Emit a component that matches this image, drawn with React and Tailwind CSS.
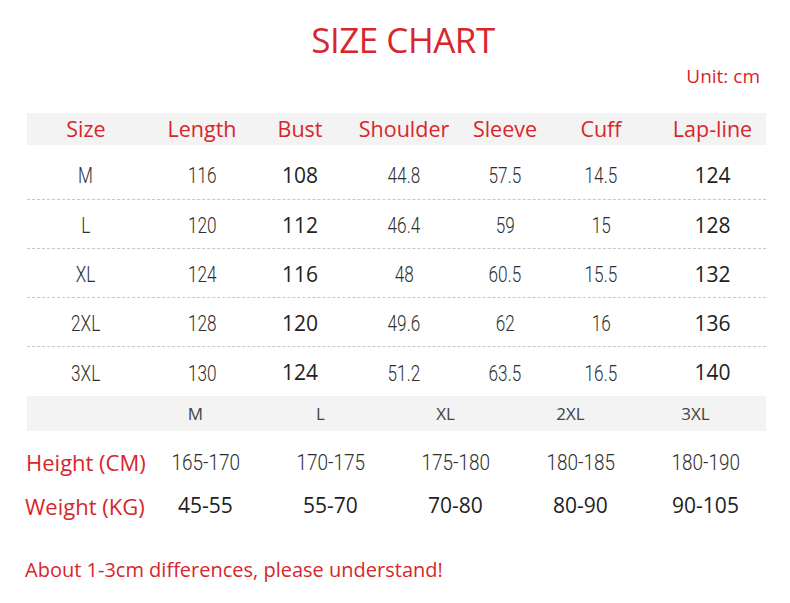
const sizes = [
  ['M', '116', '108', '44.8', '57.5', '14.5', '124'],
  ['L', '120', '112', '46.4', '59', '15', '128'],
  ['XL', '124', '116', '48', '60.5', '15.5', '132'],
  ['2XL', '128', '120', '49.6', '62', '16', '136'],
  ['3XL', '130', '124', '51.2', '63.5', '16.5', '140'],
];

const headers = ['Size', 'Length', 'Bust', 'Shoulder', 'Sleeve', 'Cuff', 'Lap-line'];

const heights = ['165-170', '170-175', '175-180', '180-185', '180-190'];
const weights = ['45-55', '55-70', '70-80', '80-90', '90-105'];

const cols = 'grid grid-cols-[118px_114px_82px_126px_76px_116px_107px]';
// DIN-like condensed numerals
const narrow = "inline-block font-['Roboto',sans-serif] font-light text-[#2e2e2e]";

const App = () => {
  return (
    <div className="w-[790px] h-[603px] bg-white font-['Open_Sans',sans-serif] text-[#d7262c]">
      <h1 className="pt-[18px] pl-[16px] text-center text-[35px] leading-[44px] tracking-[-0.5px]">SIZE CHART</h1>
      <p className="mt-[2px] pr-[30px] text-right text-[19px] leading-[24px]">Unit: cm</p>

      <div className="mx-[27px] mt-[25px] w-[739px]">
        <div className={`${cols} h-[32px] items-center bg-[#f3f3f3] text-center text-[21.5px]`}>
          {headers.map((h) => (
            <span key={h}>{h}</span>
          ))}
        </div>

        {sizes.map((row, i) => (
          <div
            key={row[0]}
            className={`${cols} items-center text-center ${
              i === 0 ? 'h-[55px] pt-[7px]' : 'h-[49px] pt-[3px]'
            } ${i < sizes.length - 1 ? 'border-b border-dashed border-[#c8c8c8]' : ''}`}
          >
            {row.map((v, j) => (
              <div key={j}>
                <span
                  className={
                    j === 2 || j === 6
                      ? "font-['Open_Sans',sans-serif] text-[21px] text-[#222]"
                      : `${narrow} scale-x-[0.78] text-[22px]`
                  }
                >
                  {v}
                </span>
              </div>
            ))}
          </div>
        ))}

        <div className="grid h-[35px] grid-cols-[106px_repeat(5,125px)] items-center bg-[#f3f3f3] text-center text-[17px] text-[#444]">
          <span />
          {['M', 'L', 'XL', '2XL', '3XL'].map((s) => (
            <span key={s}>{s}</span>
          ))}
        </div>

        <div className="mt-[14px] grid h-[34px] grid-cols-[116px_repeat(5,125px)] items-center">
          <span className="-ml-[1px] text-left text-[22px] whitespace-nowrap">Height (CM)</span>
          {heights.map((h) => (
            <div key={h} className="text-center">
              <span className={`${narrow} scale-x-[0.86] text-[22px]`}>{h}</span>
            </div>
          ))}
        </div>

        <div className="mt-[10px] grid h-[34px] grid-cols-[116px_repeat(5,125px)] items-center">
          <span className="-ml-[2px] text-left text-[22px] whitespace-nowrap">Weight (KG)</span>
          {weights.map((w) => (
            <span key={w} className="text-center text-[21px] font-medium text-[#222]">
              {w}
            </span>
          ))}
        </div>
      </div>

      <p className="ml-[25px] mt-[34px] text-[20px] leading-[26px]">
        About 1-3cm differences, please understand!
      </p>
    </div>
  );
};

export default App;
